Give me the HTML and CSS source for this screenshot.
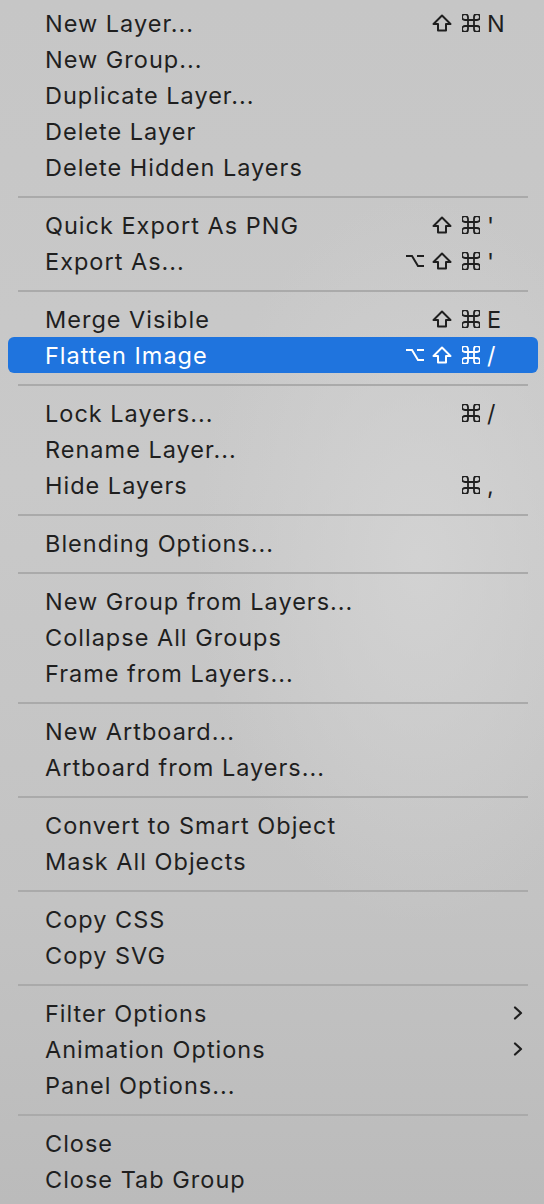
FILE: index.html
```html
<!DOCTYPE html>
<html>
<head>
<meta charset="utf-8">
<link rel="stylesheet" href="styles.css">
</head>
<body>
<div class="menu">
  <div class="item"><span class="label">New Layer...</span><span class="sc"><svg class="mod shift" viewBox="0 0 20 18"><path d="M10 1.5 L18.5 10 L14 10 L14 16.5 L6 16.5 L6 10 L1.5 10 Z"/></svg><svg class="mod cmd" viewBox="0 0 18 18"><path d="M6 6 L6 3 A3 3 0 1 0 3 6 L15 6 A3 3 0 1 0 12 3 L12 15 A3 3 0 1 0 15 12 L3 12 A3 3 0 1 0 6 15 Z"/></svg><span class="key">N</span></span></div>
  <div class="item"><span class="label">New Group...</span></div>
  <div class="item"><span class="label">Duplicate Layer...</span></div>
  <div class="item"><span class="label">Delete Layer</span></div>
  <div class="item"><span class="label">Delete Hidden Layers</span></div>
  <div class="sep"></div>
  <div class="item"><span class="label">Quick Export As PNG</span><span class="sc"><svg class="mod shift" viewBox="0 0 20 18"><path d="M10 1.5 L18.5 10 L14 10 L14 16.5 L6 16.5 L6 10 L1.5 10 Z"/></svg><svg class="mod cmd" viewBox="0 0 18 18"><path d="M6 6 L6 3 A3 3 0 1 0 3 6 L15 6 A3 3 0 1 0 12 3 L12 15 A3 3 0 1 0 15 12 L3 12 A3 3 0 1 0 6 15 Z"/></svg><span class="key">'</span></span></div>
  <div class="item"><span class="label">Export As...</span><span class="sc"><svg class="mod opt" viewBox="0 0 20 14"><path d="M1 2 H7 L13 12 H19 M12 2 H19"/></svg><svg class="mod shift" viewBox="0 0 20 18"><path d="M10 1.5 L18.5 10 L14 10 L14 16.5 L6 16.5 L6 10 L1.5 10 Z"/></svg><svg class="mod cmd" viewBox="0 0 18 18"><path d="M6 6 L6 3 A3 3 0 1 0 3 6 L15 6 A3 3 0 1 0 12 3 L12 15 A3 3 0 1 0 15 12 L3 12 A3 3 0 1 0 6 15 Z"/></svg><span class="key">'</span></span></div>
  <div class="sep"></div>
  <div class="item"><span class="label">Merge Visible</span><span class="sc"><svg class="mod shift" viewBox="0 0 20 18"><path d="M10 1.5 L18.5 10 L14 10 L14 16.5 L6 16.5 L6 10 L1.5 10 Z"/></svg><svg class="mod cmd" viewBox="0 0 18 18"><path d="M6 6 L6 3 A3 3 0 1 0 3 6 L15 6 A3 3 0 1 0 12 3 L12 15 A3 3 0 1 0 15 12 L3 12 A3 3 0 1 0 6 15 Z"/></svg><span class="key">E</span></span></div>
  <div class="item active"><span class="label">Flatten Image</span><span class="sc"><svg class="mod opt" viewBox="0 0 20 14"><path d="M1 2 H7 L13 12 H19 M12 2 H19"/></svg><svg class="mod shift" viewBox="0 0 20 18"><path d="M10 1.5 L18.5 10 L14 10 L14 16.5 L6 16.5 L6 10 L1.5 10 Z"/></svg><svg class="mod cmd" viewBox="0 0 18 18"><path d="M6 6 L6 3 A3 3 0 1 0 3 6 L15 6 A3 3 0 1 0 12 3 L12 15 A3 3 0 1 0 15 12 L3 12 A3 3 0 1 0 6 15 Z"/></svg><span class="key">/</span></span></div>
  <div class="sep"></div>
  <div class="item"><span class="label">Lock Layers...</span><span class="sc"><svg class="mod cmd" viewBox="0 0 18 18"><path d="M6 6 L6 3 A3 3 0 1 0 3 6 L15 6 A3 3 0 1 0 12 3 L12 15 A3 3 0 1 0 15 12 L3 12 A3 3 0 1 0 6 15 Z"/></svg><span class="key">/</span></span></div>
  <div class="item"><span class="label">Rename Layer...</span></div>
  <div class="item"><span class="label">Hide Layers</span><span class="sc"><svg class="mod cmd" viewBox="0 0 18 18"><path d="M6 6 L6 3 A3 3 0 1 0 3 6 L15 6 A3 3 0 1 0 12 3 L12 15 A3 3 0 1 0 15 12 L3 12 A3 3 0 1 0 6 15 Z"/></svg><span class="key">,</span></span></div>
  <div class="sep"></div>
  <div class="item"><span class="label">Blending Options...</span></div>
  <div class="sep"></div>
  <div class="item"><span class="label">New Group from Layers...</span></div>
  <div class="item"><span class="label">Collapse All Groups</span></div>
  <div class="item"><span class="label">Frame from Layers...</span></div>
  <div class="sep"></div>
  <div class="item"><span class="label">New Artboard...</span></div>
  <div class="item"><span class="label">Artboard from Layers...</span></div>
  <div class="sep"></div>
  <div class="item"><span class="label">Convert to Smart Object</span></div>
  <div class="item"><span class="label">Mask All Objects</span></div>
  <div class="sep"></div>
  <div class="item"><span class="label">Copy CSS</span></div>
  <div class="item"><span class="label">Copy SVG</span></div>
  <div class="sep"></div>
  <div class="item"><span class="label">Filter Options</span><svg class="chev" width="10" height="14" viewBox="0 0 10 14"><path d="M2 1.5 L8 7 L2 12.5"/></svg></div>
  <div class="item"><span class="label">Animation Options</span><svg class="chev" width="10" height="14" viewBox="0 0 10 14"><path d="M2 1.5 L8 7 L2 12.5"/></svg></div>
  <div class="item"><span class="label">Panel Options...</span></div>
  <div class="sep"></div>
  <div class="item"><span class="label">Close</span></div>
  <div class="item"><span class="label">Close Tab Group</span></div>
</div>
</body>
</html>
```

FILE: styles.css
```css
html, body {
  margin: 0;
  padding: 0;
}
body {
  width: 544px;
  height: 1204px;
  overflow: hidden;
  background:
    radial-gradient(ellipse 320px 520px at 420px 560px, rgba(212,212,212,0.85), rgba(212,212,212,0) 70%),
    linear-gradient(180deg, #c6c6c6 0%, #c9c9c9 40%, #c3c3c3 75%, #bbbbbb 100%);
  font-family: "Inter", "Roboto", "Liberation Sans", sans-serif;
}
.menu {
  display: flex;
  flex-direction: column;
  padding: 5px 6px 7px 8px;
}
.item {
  display: flex;
  align-items: center;
  height: 36px;
  padding: 0 0 0 37px;
  border-radius: 6px;
  color: #1f1f1f;
  font-size: 23.5px;
  letter-spacing: 1px;
}
.item.active {
  background: #1f74de;
  color: #ffffff;
}
.label {
  flex: 1;
  white-space: nowrap;
}
.sc {
  display: flex;
  align-items: center;
  justify-content: flex-end;
  padding-right: 21px;
}
.mod {
  fill: none;
  stroke: currentColor;
  stroke-width: 2;
  stroke-linejoin: round;
  stroke-linecap: round;
}
.opt {
  width: 20px;
  height: 14px;
  margin-right: 7px;
  stroke-linejoin: miter;
  stroke-linecap: butt;
}
.shift {
  width: 20px;
  height: 18px;
  margin-right: 10px;
}
.cmd {
  width: 18px;
  height: 18px;
  margin-right: 7px;
  stroke-width: 1.8;
}
.key {
  width: 30px;
  text-align: left;
  letter-spacing: 0;
}
.chev {
  margin-right: 15px;
  fill: none;
  stroke: #1f1f1f;
  stroke-width: 2.2;
  stroke-linecap: round;
  stroke-linejoin: round;
}
.sep {
  height: 2px;
  margin: 11px 10px 9px 10px;
  background: #aaaaaa;
}
```
